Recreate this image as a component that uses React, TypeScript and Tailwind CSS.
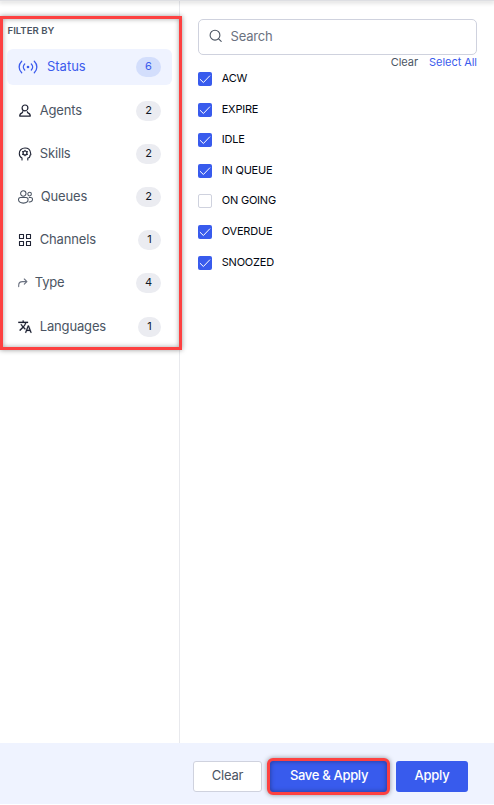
import type { ReactNode } from 'react';

type Filter = { label: string; count: number; icon: ReactNode; gap: string; nudge: string; active?: boolean };

const StatusIcon = () => (
  <svg width="20" height="16" viewBox="0 0 20 16" fill="none" stroke="currentColor" strokeWidth="1.3" strokeLinecap="round">
    <path d="M3.7 2.2C.3 5.5.3 10.5 3.7 13.8M16.3 2.2c3.4 3.3 3.4 8.3 0 11.6M6.7 5c-1.8 1.8-1.8 4.2 0 6M13.3 5c1.8 1.8 1.8 4.2 0 6" />
    <circle cx="10" cy="8" r="1.3" fill="currentColor" stroke="none" />
  </svg>
);

const AgentIcon = () => (
  <svg width="14" height="14" viewBox="0 0 14 14" fill="none" stroke="#1e2233" strokeWidth="1.2" strokeLinejoin="round">
    <circle cx="7" cy="3.9" r="2.9" />
    <path d="M4.9 7.2 4.4 8.6C2.5 9.3 1.7 10 1.7 12.1h10.6c0-2.1-.8-2.8-2.7-3.5L9.1 7.2" />
  </svg>
);

const SkillIcon = () => (
  <svg width="14" height="14" viewBox="0 0 14 14" fill="none" stroke="#1e2233" strokeWidth="1.1" strokeLinecap="round" strokeLinejoin="round">
    <path d="M4 13v-2C2.1 10 1.3 8.3 1.3 6.4 1.3 3.2 3.8 1 7 1s5.2 2 5.5 4.8l.4 1.9-.9.5c0 1.8-.6 2.7-2.2 2.8V13" />
    <circle cx="7" cy="6" r="2" />
    <path d="M7 3.2V4M7 8v.8M4.6 4.6l.7.4M8.7 7l.7.4M4.6 7.4l.7-.4M8.7 5l.7-.4" />
  </svg>
);

const QueueIcon = () => (
  <svg width="15" height="14" viewBox="0 0 15 14" fill="none" stroke="#4b5563" strokeWidth="1.05" strokeLinecap="round" strokeLinejoin="round">
    <circle cx="5.3" cy="3.5" r="2.7" />
    <path d="M2.5 7.5h5.6c1.2 0 2 .9 2 2.1 0 2.2-2 3.5-4.8 3.5S.5 11.8.5 9.6c0-1.2.8-2.1 2-2.1Z" />
    <circle cx="11.6" cy="4.1" r="1.8" />
    <path d="M11.2 7.5h1.5c1 0 1.8.7 1.8 1.7 0 1.8-1.3 2.8-3.4 2.7" />
  </svg>
);

const ChannelIcon = () => (
  <svg width="14" height="14" viewBox="0 0 14 14" fill="none" stroke="#1e2233" strokeWidth="1.1" strokeLinejoin="round">
    <path d="M1.5 1.5h4v4h-4zM8.5 1.5h4v4h-4zM1.5 8.5h4v4h-4zM8.5 8.5h4v4h-4z" />
  </svg>
);

const TypeIcon = () => (
  <svg width="10" height="10" viewBox="0 0 10 10" fill="none" stroke="#6b7280" strokeWidth="1.1" strokeLinecap="round" strokeLinejoin="round">
    <path d="M.7 8.6V7.2c0-2.3 1.5-3.6 3.8-3.6h4.3M6.3 1l2.6 2.6-2.6 2.6" />
  </svg>
);

const LanguageIcon = () => (
  <svg width="14" height="14" viewBox="0.5 2 23 21" fill="#1e2233" stroke="#1e2233" strokeWidth=".3">
    <path d="m12.87 15.07-2.54-2.51.03-.03A17.52 17.52 0 0 0 14.07 6H17V4h-7V2H8v2H1v1.99h11.17C11.5 7.92 10.44 9.75 9 11.35 8.07 10.32 7.3 9.19 6.69 8h-2c.73 1.63 1.73 3.17 2.98 4.56l-5.09 5.02L4 19l5-5 3.11 3.11.76-2.04ZM18.5 10h-2L12 22h2l1.12-3h4.75L21 22h2l-4.5-12Zm-2.62 7 1.62-4.33L19.12 17h-3.24Z" />
  </svg>
);

const filters: Filter[] = [
  { label: 'Status', count: 6, icon: <StatusIcon />, gap: 'gap-[9px]', nudge: 'pb-0.5', active: true },
  { label: 'Agents', count: 2, icon: <AgentIcon />, gap: 'gap-2', nudge: 'pb-px' },
  { label: 'Skills', count: 2, icon: <SkillIcon />, gap: 'gap-2', nudge: 'pb-px' },
  { label: 'Queues', count: 2, icon: <QueueIcon />, gap: 'gap-2', nudge: 'pb-0.5' },
  { label: 'Channels', count: 1, icon: <ChannelIcon />, gap: 'gap-2', nudge: 'pb-0.5' },
  { label: 'Type', count: 4, icon: <TypeIcon />, gap: 'gap-[7px]', nudge: 'pb-0.5' },
  { label: 'Languages', count: 1, icon: <LanguageIcon />, gap: 'gap-2', nudge: 'pb-px' },
];

const statuses = [
  { label: 'ACW', checked: true },
  { label: 'EXPIRE', checked: true },
  { label: 'IDLE', checked: true },
  { label: 'IN QUEUE', checked: true },
  { label: 'ON GOING', checked: false },
  { label: 'OVERDUE', checked: true },
  { label: 'SNOOZED', checked: true },
];

function FilterRow({ label, count, icon, gap, nudge, active }: Filter) {
  return (
    <li className={`flex h-9 items-center rounded-md pr-[11px] pl-[11px] ${gap} ${active ? 'bg-[#eff3ff] text-[#3b5bed]' : 'text-[#4b5563]'}`}>
      {icon}
      <span className={`text-[13px] leading-5 ${active ? 'tracking-[-0.02px]' : '-ml-[0.3px] tracking-[-0.15px]'} ${nudge}`}>{label}</span>
      <span className={`ml-auto flex h-5 items-start justify-center rounded-full pt-0.5 text-[11px] leading-[14px] ${count === 1 ? 'w-[23px]' : 'w-[25px]'} ${active ? 'bg-[#d3defc]' : 'bg-[#ebecf1] text-[#111827]'}`}>
        {count}
      </span>
    </li>
  );
}

function Checkbox({ checked }: { checked: boolean }) {
  return checked ? (
    <span className="flex size-3.5 items-center justify-center rounded-[2px] bg-[#385bed]">
      <svg width="14" height="14" viewBox="0 0 14 14" fill="none" stroke="#ffffff" strokeWidth="1" strokeLinecap="round" strokeLinejoin="round">
        <path d="m2.2 7.4 3.2 3.1 6.3-6.6" />
      </svg>
    </span>
  ) : (
    <span className="size-3.5 rounded-[2px] border border-[#cfd2de] bg-white" />
  );
}

export default function App() {
  return (
    <div className="flex h-[805px] w-[494px] flex-col overflow-hidden bg-white font-['Inter',sans-serif]">
      <div className="relative h-px shrink-0 bg-[#dedfe3] shadow-[0_1px_4px_1px_rgba(0,0,0,0.16)]" />
      <main className="flex min-h-0 flex-1">
        <aside className="w-[180px] shrink-0 border-r border-[#e8e9ed] pt-[15px]">
          <section className="relative h-[334px] w-[182px] border-3 border-[#fd4141] pl-1 shadow-[0_0_5px_rgba(0,0,0,0.4),inset_0_0_5px_rgba(0,0,0,0.35)]">
            <h2 className="pt-[6px] pl-[0.5px] text-[9.6px] leading-3 font-semibold text-[#4b5563]">FILTER BY</h2>
            <ul className="mt-[12.4px] flex w-[165px] flex-col gap-[7.2px]">
              {filters.map((f) => <FilterRow key={f.label} {...f} />)}
            </ul>
          </section>
        </aside>
        <section className="flex-1 pt-[18px] pr-[17px] pl-[18px]">
          <label className="flex h-9 items-center gap-[7.5px] rounded-[5px] border border-[#cfd2de] pl-[10px]">
            <svg className="-mt-0.5" width="14" height="14" viewBox="0 0 14 14" fill="none" stroke="#4b5563" strokeWidth="1.1" strokeLinecap="round">
              <circle cx="6" cy="6.2" r="4.9" />
              <path d="m9.6 9.8 2.6 2.6" />
            </svg>
            <input className="min-w-0 flex-1 text-[13px] tracking-[-0.2px] outline-none placeholder:text-[#6b7280]" placeholder="Search" />
          </label>
          <div className="flex h-[14px] justify-end gap-[11px] text-[11px] leading-[14px] tracking-[-0.05px]">
            <button className="text-[#4b5563]">Clear</button>
            <button className="text-[#3b5bed]">Select All</button>
          </div>
          <ul className="mt-[3px] flex flex-col gap-[16.6px]">
            {statuses.map((s) => (
              <li key={s.label} className="flex h-3.5 items-center gap-[9.7px]">
                <Checkbox checked={s.checked} />
                <span className="pb-0.5 text-[11px] leading-3 tracking-[-0.2px] text-[#030712]">{s.label}</span>
              </li>
            ))}
          </ul>
        </section>
      </main>
      <footer className="mb-px flex h-[61px] shrink-0 items-center justify-end bg-[#eff3ff] pt-[6px] pr-[26px] text-[13px] tracking-[-0.2px]">
        <button className="mr-[5px] h-[31px] w-[69px] rounded-[3px] border border-[#cfd2de] bg-white pb-px text-[#4b5563]">Clear</button>
        <button className="mr-[6px] h-[37px] w-[123px] rounded-[6px] border-3 border-[#fd4141] bg-[#385bed] pb-px pl-px font-medium tracking-[-0.32px] text-white shadow-[0_0_5px_rgba(0,0,0,0.4),inset_0_0_5px_rgba(0,0,0,0.4)]">Save &amp; Apply</button>
        <button className="h-[31px] w-[72px] rounded-[3px] bg-[#385bed] pb-px font-medium text-white">Apply</button>
      </footer>
    </div>
  );
}
